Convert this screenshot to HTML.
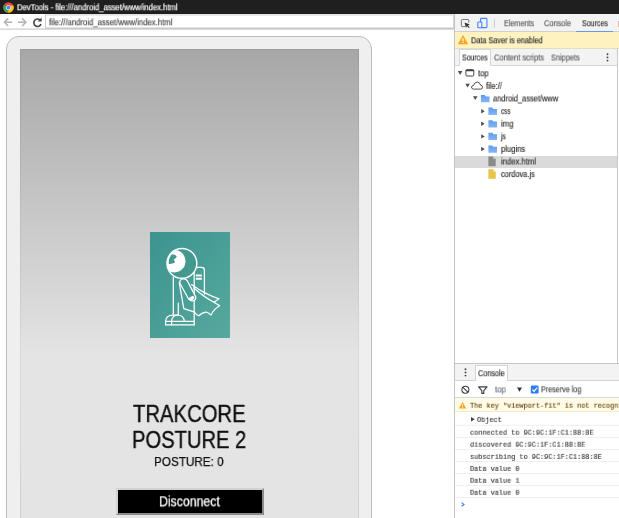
<!DOCTYPE html>
<html>
<head>
<meta charset="utf-8">
<title>DevTools</title>
<style>
*{box-sizing:border-box;margin:0;padding:0}
html,body{width:619px;height:518px;overflow:hidden;background:#fff;font-family:"Liberation Sans",sans-serif}
body{position:relative}
.a{position:absolute}
.t{position:absolute;white-space:nowrap;line-height:1;transform-origin:0 0;will-change:transform}
svg{position:absolute;overflow:visible}
.s{font-family:"Liberation Sans",sans-serif;-webkit-text-stroke:0.18px currentColor}
.m{font-family:"Liberation Mono",monospace}

</style>
</head>
<body>
<!-- window chrome -->
<div class="a" style="left:0;top:0;width:619px;height:14px;background:#1f1f1f"></div>
<svg style="left:3px;top:2px" width="11" height="11" viewBox="0 0 11 11">
  <circle cx="5.5" cy="5.5" r="5.2" fill="#e8453c"/>
  <path d="M5.5 5.5 L0.95 3 A5.2 5.2 0 0 0 5.2 10.7 Z" fill="#3aa757"/>
  <path d="M5.5 5.5 L5.2 10.7 A5.2 5.2 0 0 0 10.1 3 Z" fill="#fbc116"/>
  <circle cx="5.5" cy="5.5" r="2.5" fill="#f4f4f4"/>
  <circle cx="5.5" cy="5.5" r="1.9" fill="#4a8af4"/>
</svg>
<svg style="left:0;top:0" width="460" height="40" viewBox="0 0 460 40">
  <rect x="0" y="14" width="455" height="15.2" fill="#fff"/>
  <path d="M0 29.1H454" stroke="#c2c2c2" stroke-width="1"/>
  <rect x="45.5" y="14.9" width="408.2" height="13.3" fill="#fff" stroke="#cecece" stroke-width="1"/>
  <path d="M45.5 28.2H453.7" stroke="#c4c4c4" stroke-width="1"/>
</svg>
<!-- nav arrows -->
<svg style="left:3px;top:17px" width="42" height="11" viewBox="0 0 42 11">
  <g fill="none" stroke="#b4b4b4" stroke-width="1.5">
    <path d="M9.3 5.2H1.6M5.2 1.4L1.4 5.2L5.2 9"/>
    <path d="M15 5.2H22.7M19.1 1.4L22.9 5.2L19.1 9"/>
  </g>
  <path d="M37.2 3.2A3.7 3.7 0 1 0 38 7" fill="none" stroke="#454545" stroke-width="1.6"/>
  <path d="M38.6 0.6V4.6H34.6Z" fill="#454545"/>
</svg>

<!-- device -->
<div class="a" style="left:6px;top:36px;width:366px;height:520px;border:1px solid #bdbdbd;border-radius:13px;background:#efefef"></div>
<div class="a" style="left:19.5px;top:49px;width:339px;height:480px;background:#b8b8b8 linear-gradient(#9c9c9c 0px,#dadada 306px,#cfcfcf 480px)"></div>
<div class="a" style="left:20.5px;top:50px;width:337.5px;height:480px;background:#e4e4e4 linear-gradient(#a7a7a7 0px,#e4e4e4 306px)"></div>
<!-- logo -->
<div class="a" style="left:149.7px;top:231.5px;width:80.6px;height:106.2px;background:linear-gradient(128deg,#3c938f,#56a99e)"></div>
<svg style="left:0;top:0" width="619" height="518" viewBox="0 0 619 518">
 <g fill="none" stroke="#fff" stroke-width="1.25" stroke-linejoin="round" stroke-linecap="round">
  <!-- backpack -->
  <path d="M194.2 324.8V270.2Q194.2 267.4 197 267.4H201.6Q204.4 267.4 204.4 270.2V294"/>
  <path d="M195.8 275.5H201.8M195.8 278.8H201.8" stroke-width="1.9" stroke-linecap="butt"/>
  <!-- torso -->
  <path d="M173.3 277V315"/>
  <path d="M178.3 303V315"/>
  <!-- foot -->
  <path d="M165.6 324.8V321Q166.2 315 173 315H178Q184 315.6 184.3 321.3"/>
  <path d="M171.6 324.8V321Q172 316 177 315"/>
  <path d="M165.6 321.3H194.2M165.6 324.8H194.2"/>
  <!-- cape -->
  <path d="M179.2 282.5L183.8 308.6L194.6 312.2Q196 314.5 198.8 315.8Q202.5 312 206.3 312Q209 313 211 315.2Q213.5 309 219.7 305.7L213.9 302.2L219.1 298.8Q205 294.5 191.6 284.6"/>
  <path d="M193.8 288Q204 297 213.9 302.2"/>
 </g>
 <!-- arm -->
 <path d="M180 283.5Q179 280 182.5 279Q185.8 278 187.4 281L195.6 296.6Q196.4 299.6 193.4 300.6Q190.2 301.4 188.6 299Z" fill="#469b94" stroke="#fff" stroke-width="1.25" stroke-linejoin="round"/>
 <ellipse cx="191.6" cy="298.3" rx="3" ry="1.8" transform="rotate(-25 191.6 298.3)" fill="#fff"/>
 <!-- head -->
 <circle cx="181.9" cy="263.4" r="14.9" fill="#43988f" stroke="#fff" stroke-width="1.4"/>
 <clipPath id="hc"><circle cx="181.9" cy="263.4" r="14.9"/></clipPath>
 <g clip-path="url(#hc)">
  <ellipse cx="174.5" cy="261.2" rx="11" ry="11.2" fill="#fff"/>
  <path d="M172 254.2Q175.5 254.2 176.8 256.6Q176 258.6 173.6 259.6Q175.2 261 174.8 262.6Q172 264.4 168.8 264Q168.2 258 172 254.2Z" fill="#43988f"/>
 </g>
</svg>
<!-- button -->
<div class="a" style="left:116px;top:487.6px;width:147.7px;height:27.6px;background:#000;border:2.2px solid #d2d2d2;border-right-color:#8c8c8c;border-bottom-color:#8c8c8c"></div>

<!-- devtools -->
<div class="a" style="left:455px;top:14px;width:164px;height:504px;background:#fff"></div>
<div class="a" style="left:454px;top:14px;width:1px;height:504px;background:#c3c3c3"></div>
<div class="a" style="left:455px;top:14px;width:164px;height:17px;background:#f3f3f3"></div>
<div class="a" style="left:455px;top:31px;width:164px;height:1px;background:#d0d0d0"></div>
<div class="a" style="left:576.3px;top:30.6px;width:36.7px;height:1.5px;background:#5b9cf5"></div>
<div class="a" style="left:617.6px;top:20.5px;width:1.4px;height:6px;background:#e8b8b0"></div>
<!-- inspect & device icons -->
<svg style="left:455px;top:14px" width="50" height="17" viewBox="0 0 50 17">
  <path d="M10.4 12.6H7.2Q6.4 12.6 6.4 11.8V6.3Q6.4 5.5 7.2 5.5H13Q13.8 5.5 13.8 6.3V8.6" fill="none" stroke="#6a6a6a" stroke-width="0.9"/>
  <path d="M9.6 8.4L14.9 10.5L12.9 11.3L14.6 13.2L13.7 14L12 12.1L11 13.9Z" fill="#333"/>
  <rect x="25.5" y="4.4" width="6.4" height="9.2" rx="0.8" fill="none" stroke="#4285f4" stroke-width="1.1"/>
  <rect x="22.8" y="8" width="4" height="5.8" rx="0.6" fill="#f3f3f3" stroke="#4285f4" stroke-width="1.1"/>
  <path d="M39.4 4.7V13.5" stroke="#ccc" stroke-width="1"/>
</svg>
<!-- warning bar -->
<div class="a" style="left:455px;top:32px;width:164px;height:16px;background:#fdf2c0"></div>
<div class="a" style="left:455px;top:47.5px;width:164px;height:1px;background:#e0ddc8"></div>
<svg style="left:458px;top:35.2px" width="10" height="9.4" viewBox="0 0 10 9.4">
  <path d="M5 0.5L9.7 9H0.3Z" fill="#f5a623" stroke="#f5a623" stroke-width="0.6" stroke-linejoin="round"/>
  <path d="M5 3.2V6.2M5 7.1V8.1" stroke="#fff" stroke-width="1.2"/>
</svg>
<!-- sub tabs -->
<div class="a" style="left:455px;top:48.5px;width:162px;height:16.5px;background:#f3f3f3"></div>
<div class="a" style="left:455px;top:65px;width:162px;height:1px;background:#d6d6d6"></div>
<div class="a" style="left:458.8px;top:49.4px;width:31.8px;height:16.6px;background:#fff;border:1px solid #d6d6d6;border-bottom:none"></div>
<div class="a" style="left:617px;top:48.5px;width:1.3px;height:316px;background:#c9c9c9"></div>
<svg style="left:605.6px;top:52.6px" width="3" height="9" viewBox="0 0 3 9"><circle cx="1.5" cy="1.2" r="0.95" fill="#444"/><circle cx="1.5" cy="4.4" r="0.95" fill="#444"/><circle cx="1.5" cy="7.6" r="0.95" fill="#444"/></svg>
<!-- tree -->
<div class="a" style="left:455px;top:155.6px;width:162px;height:12px;background:#dadada"></div>
<svg style="left:0;top:0" width="619" height="518" viewBox="0 0 619 518">
<defs><linearGradient id="fg" x1="0" y1="0" x2="0" y2="1"><stop offset="0" stop-color="#5e9cee"/><stop offset="1" stop-color="#86b6f4"/></linearGradient></defs>
 <g fill="#4d4d4d">
  <path d="M457.9 71.1H462.4L460.1 74.9Z"/>
  <path d="M465.4 83.7H469.9L467.6 87.5Z"/>
  <path d="M473.0 96.3H477.5L475.2 100.1Z"/>
  <path d="M481.2 109.0V113.4L484.7 111.2Z"/>
  <path d="M481.2 121.6V126.0L484.7 123.8Z"/>
  <path d="M481.2 134.2V138.6L484.7 136.4Z"/>
  <path d="M481.2 146.8V151.2L484.7 149.0Z"/>
 </g>
 <rect x="465.9" y="69.7" width="7.9" height="6.3" rx="1" fill="none" stroke="#3e3e3e" stroke-width="0.95"/>
 <path d="M465.9 70.5H473.8" stroke="#3e3e3e" stroke-width="1.5"/>
 <path d="M473.4 89.1Q471.4 88.9 471.5 87Q471.7 85.5 473.5 85.5Q474.5 82 477.4 82Q479.8 82.2 480.6 85.2Q482.7 85.5 482.6 87.4Q482.4 89.1 480.6 89.1Z" fill="#fff" stroke="#3e3e3e" stroke-width="0.9"/>
 <g fill="url(#fg)">
  <path d="M480.9 95.0H484.9L485.8 96.4H489.5V102.3H480.9Z"/>
  <path d="M488.4 107.6H492.4L493.3 109.0H497.0V114.9H488.4Z"/>
  <path d="M488.4 120.2H492.4L493.3 121.6H497.0V127.5H488.4Z"/>
  <path d="M488.4 132.8H492.4L493.3 134.2H497.0V140.1H488.4Z"/>
  <path d="M488.4 145.4H492.4L493.3 146.8H497.0V152.7H488.4Z"/>
 </g>
 <path d="M488.4 156.6H493.2L495.7 159.1V166.2H488.4Z" fill="#8a8a8a"/><path d="M493.2 156.6V159.1H495.7Z" fill="#c8c8c8"/>
 <path d="M488.4 169.2H493.2L495.7 171.7V178.8H488.4Z" fill="#e6c547"/><path d="M493.2 169.2V171.7H495.7Z" fill="#f5e6a8"/>
</svg>
<!-- drawer -->
<div class="a" style="left:455px;top:363px;width:164px;height:1px;background:#c4c4c4"></div>
<div class="a" style="left:455px;top:364px;width:164px;height:16.5px;background:#f3f3f3"></div>
<div class="a" style="left:455px;top:380.3px;width:164px;height:1px;background:#d4d4d4"></div>
<div class="a" style="left:474.5px;top:365.3px;width:33.3px;height:16px;background:#fff;border:1px solid #d4d4d4;border-bottom:none"></div>
<svg style="left:464.4px;top:368px" width="3" height="9" viewBox="0 0 3 9"><circle cx="1.5" cy="1.2" r="0.95" fill="#444"/><circle cx="1.5" cy="4.4" r="0.95" fill="#444"/><circle cx="1.5" cy="7.6" r="0.95" fill="#444"/></svg>
<div class="a" style="left:455px;top:381.3px;width:164px;height:16px;background:#fff"></div>
<div class="a" style="left:455px;top:397.3px;width:164px;height:1px;background:#d8d8d8"></div>
<svg style="left:455px;top:381px" width="90" height="17" viewBox="0 0 90 17">
  <circle cx="10.4" cy="8.7" r="3.5" fill="none" stroke="#3c3c3c" stroke-width="1.05"/>
  <path d="M7.9 6.3L12.9 11.1" stroke="#3c3c3c" stroke-width="1.05"/>
  <path d="M23.6 5.9H32L28.8 9.6V12.4H26.8V9.6Z" fill="none" stroke="#3c3c3c" stroke-width="1.1" stroke-linejoin="round"/>
  <path d="M62 6.6H67L64.5 10.8Z" fill="#333"/>
  <rect x="75.8" y="4.6" width="7.8" height="7.8" rx="1.2" fill="#2f7cf0"/>
  <path d="M77.4 8.6L79.1 10.4L82.2 6.5" fill="none" stroke="#fff" stroke-width="1.2"/>
</svg>
<!-- console rows -->
<div class="a" style="left:455px;top:398.3px;width:164px;height:13.2px;background:#fffbe6"></div>
<div class="a" style="left:455px;top:411.3px;width:164px;height:1px;background:#f5ecc4"></div>
<svg style="left:459.2px;top:402.3px" width="7.2" height="6.6" viewBox="0 0 10 9.4">
  <path d="M5 0.5L9.7 9H0.3Z" fill="#f5a623" stroke="#f5a623" stroke-width="0.6" stroke-linejoin="round"/>
  <path d="M5 3.2V6.2M5 7.1V8.1" stroke="#fff" stroke-width="1.3"/>
</svg>
<svg style="left:0;top:0" width="619" height="518" viewBox="0 0 619 518">
 <path d="M471 417V421.6L474.8 419.3Z" fill="#444"/>
 <g stroke="#efefef" stroke-width="1">
  <path d="M455 425.3H619M455 437.4H619M455 449.5H619M455 461.6H619M455 473.5H619M455 485.4H619M455 497.5H619"/>
 </g>
 <path d="M461.6 502.6L464 504.4L461.6 506.2" fill="none" stroke="#3c7df0" stroke-width="1.1"/>
</svg>

<div class="t s" style="left:17.40px;top:3px;line-height:9px;font-size:8.2px;color:#ffffff;transform:translateY(0.30px) scaleX(0.9361);">DevTools - file:///android_asset/www/index.html</div>
<div class="t s" style="left:48.80px;top:17px;line-height:10px;font-size:8.4px;color:#4a4a4a;transform:translateY(0.30px) scaleX(0.9236);">file:///android_asset/www/index.html</div>
<div class="t s" style="left:503.80px;top:19px;line-height:9px;font-size:8.2px;color:#5f5f5f;transform:translateY(0.20px) scaleX(0.8787);">Elements</div>
<div class="t s" style="left:544.00px;top:19px;line-height:9px;font-size:8.2px;color:#5f5f5f;transform:translateY(0.20px) scaleX(0.8986);">Console</div>
<div class="t s" style="left:581.50px;top:19px;line-height:9px;font-size:8.2px;color:#333333;transform:translateY(0.20px) scaleX(0.8587);">Sources</div>
<div class="t s" style="left:471.00px;top:36px;line-height:9px;font-size:8.2px;color:#303030;transform:translateY(0.30px) scaleX(0.8900);">Data Saver is enabled</div>
<div class="t s" style="left:461.70px;top:53px;line-height:9px;font-size:8.2px;color:#333333;transform:translateY(0.50px) scaleX(0.8487);">Sources</div>
<div class="t s" style="left:494.30px;top:53px;line-height:9px;font-size:8.2px;color:#5f5f5f;transform:translateY(0.50px) scaleX(0.9156);">Content scripts</div>
<div class="t s" style="left:551.00px;top:53px;line-height:9px;font-size:8.2px;color:#5f5f5f;transform:translateY(0.50px) scaleX(0.9004);">Snippets</div>
<div class="t s" style="left:478.30px;top:69px;line-height:9px;font-size:8.2px;color:#303030;transform:translateY(0.30px) scaleX(0.9394);">top</div>
<div class="t s" style="left:486.20px;top:82px;line-height:9px;font-size:8.2px;color:#303030;transform:translateY(-0.10px) scaleX(0.9135);">file://</div>
<div class="t s" style="left:493.30px;top:95px;line-height:9px;font-size:8.2px;color:#303030;transform:translateY(-0.50px) scaleX(0.9125);">android_asset/www</div>
<div class="t s" style="left:500.80px;top:107px;line-height:9px;font-size:8.2px;color:#303030;transform:translateY(0.10px) scaleX(0.7735);">css</div>
<div class="t s" style="left:500.80px;top:120px;line-height:9px;font-size:8.2px;color:#303030;transform:translateY(-0.30px) scaleX(0.9392);">img</div>
<div class="t s" style="left:500.80px;top:132px;line-height:9px;font-size:8.2px;color:#303030;transform:translateY(0.30px) scaleX(0.8106);">js</div>
<div class="t s" style="left:500.60px;top:145px;line-height:9px;font-size:8.2px;color:#303030;transform:translateY(-0.10px) scaleX(0.9325);">plugins</div>
<div class="t s" style="left:500.60px;top:157px;line-height:9px;font-size:8.2px;color:#303030;transform:translateY(0.50px) scaleX(0.9376);">index.html</div>
<div class="t s" style="left:500.60px;top:170px;line-height:9px;font-size:8.2px;color:#303030;transform:translateY(0.10px) scaleX(0.9028);">cordova.js</div>
<div class="t s" style="left:477.80px;top:369px;line-height:9px;font-size:8.2px;color:#333333;transform:translateY(0.20px) scaleX(0.8853);">Console</div>
<div class="t s" style="left:495.30px;top:385px;line-height:9px;font-size:8.2px;color:#6c7282;transform:translateY(0.40px) scaleX(0.9569);">top</div>
<div class="t s" style="left:540.70px;top:385px;line-height:9px;font-size:8.2px;color:#4a4a4a;transform:translateY(0.30px) scaleX(0.8767);">Preserve log</div>
<div class="t s" style="left:133.10px;top:401px;line-height:26px;font-size:23.3px;color:#101010;transform:translateY(0.00px) scaleX(0.8698);-webkit-text-stroke:0.4px #101010;">TRAKCORE</div>
<div class="t s" style="left:132.20px;top:427px;line-height:26px;font-size:23.3px;color:#101010;transform:translateY(0.00px) scaleX(0.8656);-webkit-text-stroke:0.4px #101010;">POSTURE 2</div>
<div class="t s" style="left:154.00px;top:454px;line-height:15px;font-size:13.1px;color:#101010;transform:translateY(0.00px) scaleX(0.8952);-webkit-text-stroke:0.25px #101010;">POSTURE: 0</div>
<div class="t s" style="left:159.00px;top:493px;line-height:16px;font-size:14.4px;color:#ffffff;transform:translateY(0.30px) scaleX(0.8541);-webkit-text-stroke:0.25px #fff;">Disconnect</div>
<div class="t m" style="left:469.50px;top:402px;line-height:8px;font-size:7.5px;color:#5c3c00;transform:translateY(-0.30px) scaleX(0.9154);-webkit-text-stroke:0.12px currentColor;">The key &quot;viewport-fit&quot; is not recognized and ignored.</div>
<div class="t m" style="left:477.20px;top:416px;line-height:8px;font-size:7.5px;color:#303030;transform:translateY(-0.10px) scaleX(0.9150);-webkit-text-stroke:0.12px currentColor;">Object</div>
<div class="t m" style="left:469.90px;top:429px;line-height:8px;font-size:7.5px;color:#303030;transform:translateY(-0.30px) scaleX(0.9153);-webkit-text-stroke:0.12px currentColor;">connected to 9C:9C:1F:C1:88:8E</div>
<div class="t m" style="left:469.90px;top:441px;line-height:8px;font-size:7.5px;color:#303030;transform:translateY(-0.30px) scaleX(0.9153);-webkit-text-stroke:0.12px currentColor;">discovered 9C:9C:1F:C1:88:8E</div>
<div class="t m" style="left:469.90px;top:453px;line-height:8px;font-size:7.5px;color:#303030;transform:translateY(-0.10px) scaleX(0.9154);-webkit-text-stroke:0.12px currentColor;">subscribing to 9C:9C:1F:C1:88:8E</div>
<div class="t m" style="left:469.90px;top:465px;line-height:8px;font-size:7.5px;color:#303030;transform:translateY(-0.10px) scaleX(0.9153);-webkit-text-stroke:0.12px currentColor;">Data value 0</div>
<div class="t m" style="left:469.90px;top:477px;line-height:8px;font-size:7.5px;color:#303030;transform:translateY(-0.20px) scaleX(0.9153);-webkit-text-stroke:0.12px currentColor;">Data value 1</div>
<div class="t m" style="left:469.90px;top:489px;line-height:8px;font-size:7.5px;color:#303030;transform:translateY(-0.20px) scaleX(0.9153);-webkit-text-stroke:0.12px currentColor;">Data value 0</div>
</body>
</html>
